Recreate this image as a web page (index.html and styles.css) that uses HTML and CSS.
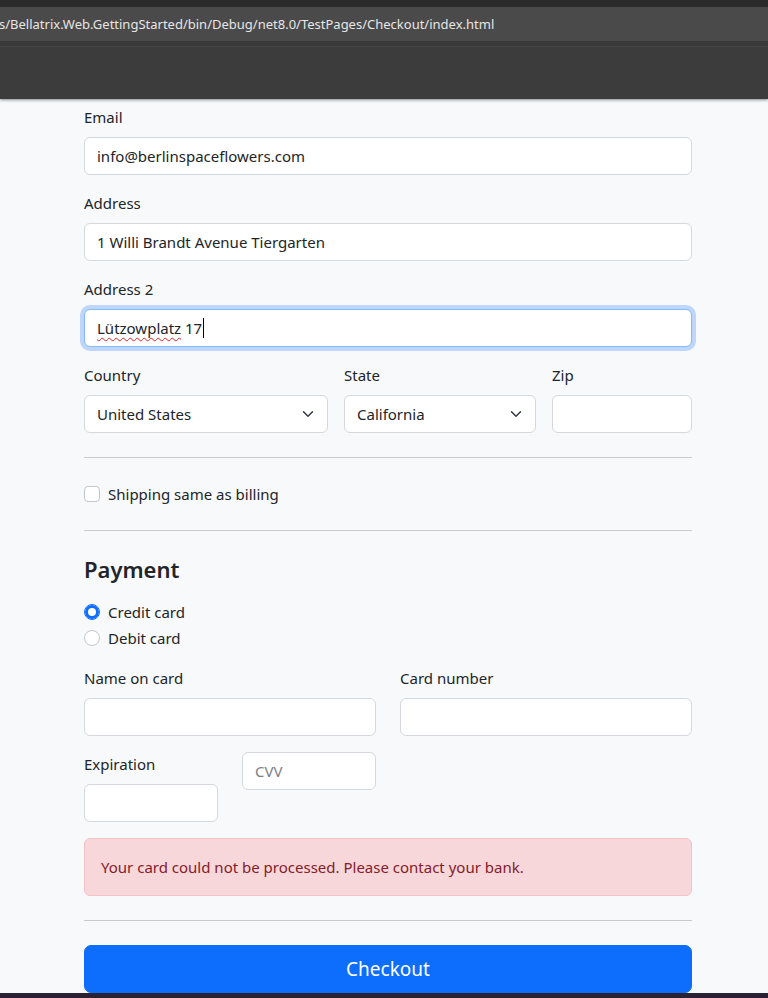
FILE: index.html
```html
<!DOCTYPE html>
<html lang="en">
<head>
<meta charset="utf-8">
<title>Checkout</title>
<link rel="stylesheet" href="styles.css">
</head>
<body>
<div class="browser">
  <div class="browser-top"></div>
  <div class="address-bar"><span class="url">s/Bellatrix.Web.GettingStarted/bin/Debug/net8.0/TestPages/Checkout/index.html</span></div>
  <div class="browser-gap"></div>
  <div class="toolbar"></div>
</div>

<main class="page">
  <form class="checkout" onsubmit="return false">
    <div class="field">
      <label class="form-label" for="email">Email</label>
      <input class="form-control" id="email" type="text" value="info@berlinspaceflowers.com">
    </div>

    <div class="field mt-16">
      <label class="form-label" for="address">Address</label>
      <input class="form-control" id="address" type="text" value="1 Willi Brandt Avenue Tiergarten">
    </div>

    <div class="field mt-16">
      <label class="form-label">Address 2</label>
      <div class="form-control focused"><span class="misspelled">Lützowplatz</span>&nbsp;17<span class="caret"></span></div>
    </div>

    <div class="row row-g16 mt-16">
      <div class="field col-country">
        <label class="form-label" for="country">Country</label>
        <div class="select-wrap">
          <select class="form-select" id="country"><option>United States</option></select>
          <svg class="chevron" viewBox="0 0 16 16" width="16" height="12" aria-hidden="true"><path d="m2 5 6 6 6-6" fill="none" stroke="#343a40" stroke-width="2" stroke-linecap="round" stroke-linejoin="round"/></svg>
        </div>
      </div>
      <div class="field col-state">
        <label class="form-label" for="state">State</label>
        <div class="select-wrap">
          <select class="form-select" id="state"><option>California</option></select>
          <svg class="chevron" viewBox="0 0 16 16" width="16" height="12" aria-hidden="true"><path d="m2 5 6 6 6-6" fill="none" stroke="#343a40" stroke-width="2" stroke-linecap="round" stroke-linejoin="round"/></svg>
        </div>
      </div>
      <div class="field col-zip">
        <label class="form-label" for="zip">Zip</label>
        <input class="form-control" id="zip" type="text" value="">
      </div>
    </div>

    <hr class="divider">

    <div class="form-check">
      <input class="check-input checkbox" type="checkbox" id="same">
      <label class="check-label" for="same">Shipping same as billing</label>
    </div>

    <hr class="divider">

    <h4 class="section-title">Payment</h4>

    <div class="radios">
      <div class="form-check radio-line">
        <input class="check-input radio" type="radio" name="pay" id="credit" checked>
        <label class="check-label" for="credit">Credit card</label>
      </div>
      <div class="form-check">
        <input class="check-input radio" type="radio" name="pay" id="debit">
        <label class="check-label" for="debit">Debit card</label>
      </div>
    </div>

    <div class="row row-g24">
      <div class="field col-half">
        <label class="form-label" for="cc-name">Name on card</label>
        <input class="form-control" id="cc-name" type="text" value="">
      </div>
      <div class="field col-half">
        <label class="form-label" for="cc-number">Card number</label>
        <input class="form-control" id="cc-number" type="text" value="">
      </div>
    </div>

    <div class="row row-g24 mt-16">
      <div class="field col-quarter">
        <label class="form-label" for="cc-exp">Expiration</label>
        <input class="form-control" id="cc-exp" type="text" value="">
      </div>
      <div class="field col-quarter">
        <input class="form-control" id="cc-cvv" type="text" placeholder="CVV">
      </div>
    </div>

    <div class="alert">Your card could not be processed. Please contact your bank.</div>

    <hr class="divider">

    <button class="btn-checkout" type="submit">Checkout</button>
  </form>
</main>

<div class="taskbar"></div>
</body>
</html>
```

FILE: styles.css
```css
* { box-sizing: border-box; }

html, body {
  margin: 0;
  padding: 0;
}

body {
  width: 768px;
  height: 998px;
  overflow: hidden;
  background: #f8f9fa;
  font-family: "Noto Sans", "Open Sans", sans-serif;
  font-size: 15px;
  line-height: 24px;
  color: #212529;
}

/* ---- fake browser chrome ---- */
.browser {
  position: relative;
  z-index: 2;
  box-shadow: 0 1px 3px rgba(0, 0, 0, 0.45);
}
.browser-top {
  height: 7px;
  background: #2b2b2b;
}
.address-bar {
  height: 34px;
  background: #4a4a4a;
  display: flex;
  align-items: center;
  overflow: hidden;
  white-space: nowrap;
}
.url {
  font-family: "Noto Sans", sans-serif;
  font-size: 13px;
  color: #e6e6e6;
  margin-left: -1px;
}
.browser-gap {
  height: 6px;
  background: #393939;
  border-bottom: 1px solid #464646;
}
.toolbar {
  height: 52px;
  background: #3c3c3c;
}

/* ---- page ---- */
.page {
  padding-top: 6px;
}
.checkout {
  width: 608px;
  margin-left: 84px;
  display: flex;
  flex-direction: column;
}

.mt-16 { margin-top: 16px; }

.field {
  display: flex;
  flex-direction: column;
  min-width: 0;
}
.form-label {
  display: block;
  line-height: 24px;
  margin-bottom: 8px;
}

.form-control,
.form-select {
  display: block;
  width: 100%;
  height: 38px;
  padding: 6px 12px;
  font-family: inherit;
  font-size: 15px;
  line-height: 24px;
  color: #212529;
  background: #fff;
  border: 1px solid #d5d8dc;
  border-radius: 6px;
  outline: none;
  margin: 0;
}
.form-control::placeholder {
  color: #7b8187;
}
.form-control.focused {
  border-color: #86b7fe;
  box-shadow: 0 0 0 4px rgba(13, 110, 253, 0.25);
  white-space: nowrap;
}
.misspelled {
  text-decoration: underline wavy #e02020;
  text-decoration-thickness: 1px;
  text-underline-offset: 3px;
  text-decoration-skip-ink: none;
}
.caret {
  display: inline-block;
  width: 1px;
  height: 20px;
  background: #000;
  vertical-align: -4px;
  margin-left: 1px;
}

.form-select {
  appearance: none;
  -webkit-appearance: none;
  padding-right: 36px;
}
.select-wrap {
  position: relative;
}
.chevron {
  position: absolute;
  right: 12px;
  top: 13px;
  pointer-events: none;
}

.row {
  display: flex;
}
.row-g16 { gap: 16px; }
.row-g24 { gap: 24px; }
.col-country { width: 244px; }
.col-state { width: 192px; }
.col-zip { width: 140px; }
.col-half { width: 292px; }
.col-quarter { width: 134px; }

.divider {
  margin: 24px 0;
  border: 0;
  border-top: 1px solid #c9cacc;
  height: 0;
  width: 100%;
}

.form-check {
  display: flex;
  align-items: center;
  min-height: 24px;
}
.check-input {
  appearance: none;
  -webkit-appearance: none;
  width: 16px;
  height: 16px;
  margin: 0 8px 0 0;
  background: #fff;
  border: 1px solid #c4c6c9;
  flex: none;
}
.checkbox {
  border-radius: 4px;
}
.radio {
  border-radius: 50%;
}
.radio:checked {
  border-color: #0d6efd;
  box-shadow: inset 0 0 0 3px #0d6efd;
}
.check-label {
  line-height: 24px;
}

.section-title {
  margin: 0 0 16px;
  font-size: 22px;
  line-height: 29px;
  font-weight: 600;
}

.radios {
  margin-bottom: 16px;
}
.radio-line {
  margin-bottom: 2px;
}

.alert {
  margin-top: 16px;
  padding: 16px;
  line-height: 24px;
  color: #842029;
  background: #f8d7da;
  border: 1px solid #f5c2c7;
  border-radius: 6px;
}

.btn-checkout {
  display: block;
  width: 100%;
  height: 48px;
  padding: 8px 16px;
  font-family: inherit;
  font-size: 19px;
  line-height: 30px;
  color: #fff;
  background: #0d6efd;
  border: 1px solid #0d6efd;
  border-radius: 7px;
  cursor: pointer;
}

.taskbar {
  height: 5px;
  background: #2a2230;
}
```
